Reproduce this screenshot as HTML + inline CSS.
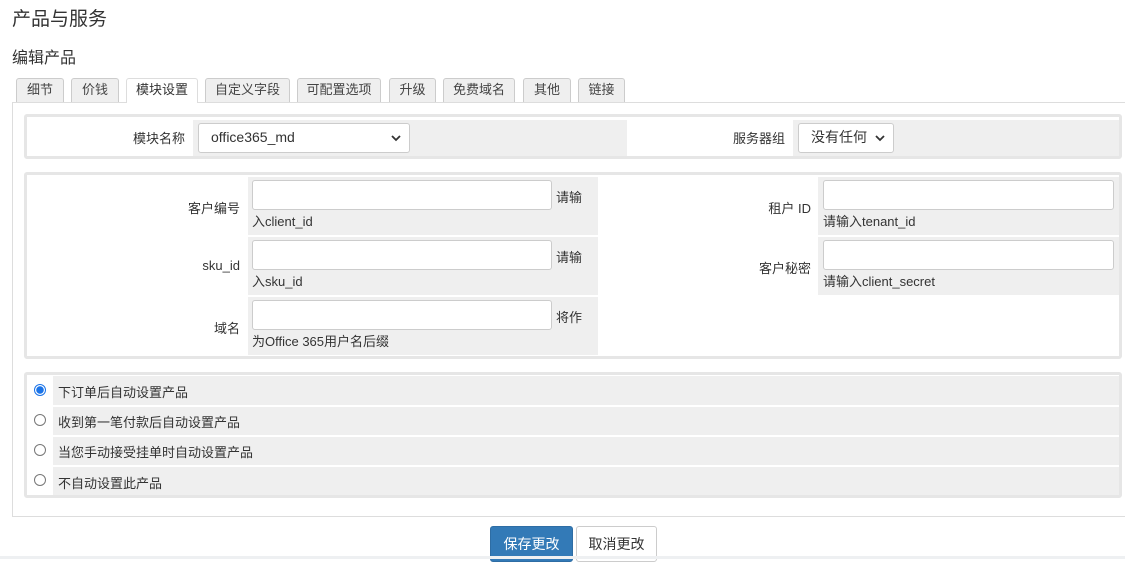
<!DOCTYPE html>
<html><head><meta charset="utf-8"><style>
*{box-sizing:border-box;margin:0;padding:0}
body{width:1125px;height:559px;overflow:hidden;background:#fff;font-family:"Liberation Sans","Noto Sans CJK SC",sans-serif;color:#333;font-size:13px;position:relative}
.a{position:absolute}
.tab{position:absolute;top:78px;height:24px;border:1px solid #ccc;border-bottom:none;border-radius:3px 3px 0 0;background:#efefef;font-size:13px;text-align:center;line-height:22px;color:#444}
.tab.on{background:#fff;height:25px;border-color:#ddd;color:#333}
.box{position:absolute;left:24px;width:1098px;border:3px solid #e6e6e6;border-radius:3px;background:#fff}
.g{position:absolute;background:#efefef}
.lbl{position:absolute;text-align:right;font-size:13px}
.inp{position:absolute;background:#fff;border:1px solid #ccc;border-radius:3px}
.sel{position:absolute;background:#fff;border:1px solid #ccc;border-radius:3px;font-size:14px;padding-left:12px;line-height:27px}
.sel svg{position:absolute;right:8px;top:10px}
.t{position:absolute;font-size:13px}
.rad{position:absolute;width:12px;height:12px;border:1px solid #777;border-radius:50%;background:#fff;left:34px}
</style></head><body>
<div class="a" style="left:12px;top:4px;font-size:19px;color:#333">产品与服务</div>
<div class="a" style="left:12px;top:44px;font-size:16px;color:#333">编辑产品</div>

<div class="tab" style="left:16px;width:48px">细节</div>
<div class="tab" style="left:71px;width:48px">价钱</div>
<div class="tab" style="left:205px;width:85px">自定义字段</div>
<div class="tab" style="left:297px;width:84px">可配置选项</div>
<div class="tab" style="left:389px;width:47px">升级</div>
<div class="tab" style="left:443px;width:72px">免费域名</div>
<div class="tab" style="left:523px;width:48px">其他</div>
<div class="tab" style="left:578px;width:47px">链接</div>
<div class="a" style="left:12px;top:102px;width:1120px;height:415px;border:1px solid #ddd"></div>
<div class="tab on" style="left:126px;width:72px">模块设置</div>

<div class="box" style="top:114px;height:45px">
 <div class="g" style="left:166px;top:3px;width:434px;height:36px"></div>
 <div class="g" style="left:766px;top:3px;width:326px;height:36px"></div>
 <div class="lbl" style="left:58px;width:100px;top:11px">模块名称</div>
 <div class="sel" style="left:171px;top:6px;width:212px;height:30px">office365_md<svg width="10" height="8" viewBox="0 0 10 8"><path d="M1 2l4 4 4-4" stroke="#333" stroke-width="1.8" fill="none"/></svg></div>
 <div class="lbl" style="left:658px;width:100px;top:11px">服务器组</div>
 <div class="sel" style="left:771px;top:6px;width:96px;height:30px">没有任何<svg width="10" height="8" viewBox="0 0 10 8"><path d="M1 2l4 4 4-4" stroke="#333" stroke-width="1.8" fill="none"/></svg></div>
</div>

<div class="box" style="top:172px;height:187px">
 <div class="g" style="left:221px;top:2px;width:350px;height:58px"></div>
 <div class="g" style="left:221px;top:62px;width:350px;height:58px"></div>
 <div class="g" style="left:221px;top:122px;width:350px;height:58px"></div>
 <div class="g" style="left:791px;top:2px;width:301px;height:58px"></div>
 <div class="g" style="left:791px;top:62px;width:301px;height:58px"></div>
 <div class="lbl" style="left:100px;width:113px;top:23px">客户编号</div>
 <div class="inp" style="left:225px;top:5px;width:300px;height:30px"></div>
 <div class="t" style="left:529px;top:12px">请输</div>
 <div class="t" style="left:225px;top:36px">入client_id</div>
 <div class="lbl" style="left:100px;width:113px;top:83px">sku_id</div>
 <div class="inp" style="left:225px;top:65px;width:300px;height:30px"></div>
 <div class="t" style="left:529px;top:72px">请输</div>
 <div class="t" style="left:225px;top:96px">入sku_id</div>
 <div class="lbl" style="left:100px;width:113px;top:143px">域名</div>
 <div class="inp" style="left:225px;top:125px;width:300px;height:30px"></div>
 <div class="t" style="left:529px;top:132px">将作</div>
 <div class="t" style="left:225px;top:156px">为Office 365用户名后缀</div>
 <div class="lbl" style="left:660px;width:124px;top:23px">租户 ID</div>
 <div class="inp" style="left:796px;top:5px;width:291px;height:30px"></div>
 <div class="t" style="left:796px;top:36px">请输入tenant_id</div>
 <div class="lbl" style="left:660px;width:124px;top:83px">客户秘密</div>
 <div class="inp" style="left:796px;top:65px;width:291px;height:30px"></div>
 <div class="t" style="left:796px;top:96px">请输入client_secret</div>
</div>

<div class="box" style="top:372px;height:126px;border-width:3px"></div>
<div class="g" style="left:53px;top:376px;width:1066px;height:29px"></div>
<div class="g" style="left:53px;top:407px;width:1066px;height:28px"></div>
<div class="g" style="left:53px;top:437px;width:1066px;height:28px"></div>
<div class="g" style="left:53px;top:467px;width:1066px;height:28px"></div>
<div class="rad" style="top:384px;border:1px solid #1a73e8;background:radial-gradient(circle,#1a73e8 0 3.5px,#fff 4px)"></div>
<div class="rad" style="top:414px"></div>
<div class="rad" style="top:444px"></div>
<div class="rad" style="top:474px"></div>
<div class="t" style="left:58px;top:382px">下订单后自动设置产品</div>
<div class="t" style="left:58px;top:412px">收到第一笔付款后自动设置产品</div>
<div class="t" style="left:58px;top:442px">当您手动接受挂单时自动设置产品</div>
<div class="t" style="left:58px;top:473px">不自动设置此产品</div>

<div class="a" style="left:490px;top:526px;width:83px;height:36px;background:#337ab7;border:1px solid #2e6da4;border-radius:3px;color:#fff;font-size:14px;text-align:center;line-height:34px">保存更改</div>
<div class="a" style="left:576px;top:526px;width:81px;height:36px;background:#fff;border:1px solid #ccc;border-radius:3px;color:#333;font-size:14px;text-align:center;line-height:34px">取消更改</div>
<div class="a" style="left:0;top:556px;width:1125px;height:3px;background:#eef0f2"></div>
</body></html>
